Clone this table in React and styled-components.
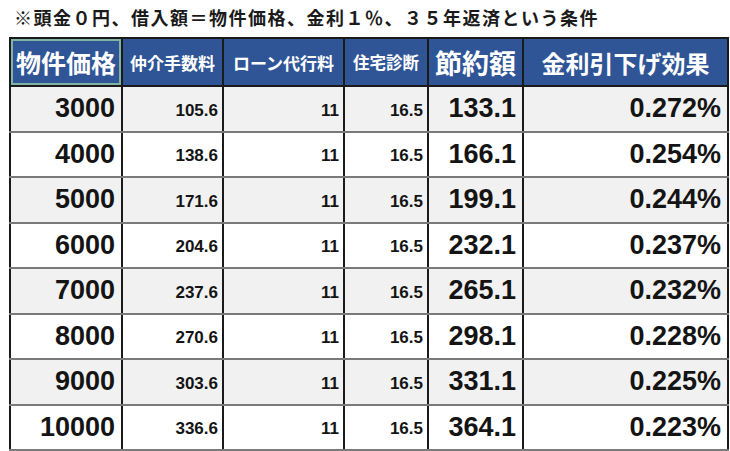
import styled, { createGlobalStyle } from "styled-components";

const GlobalStyle = createGlobalStyle`
    html, body {
        margin: 0;
        padding: 0;
        background: #ffffff;
    }
    body {
        font-family: "Liberation Sans", "Noto Sans CJK JP", sans-serif;
        color: #111;
    }
`;

const Page = styled.div`
    width: 730px;
    height: 451px;
    padding: 0 0 0 9px;
    box-sizing: border-box;
    overflow: hidden;
`;

const Title = styled.div`
    height: 37px;
    display: flex;
    align-items: center;
    padding-left: 5px;
    padding-bottom: 4px;
    box-sizing: border-box;
    font-family: "Noto Sans CJK JP", sans-serif;
    font-weight: 700;
    font-size: 18px;
    letter-spacing: 1.5px;
    color: #1a1a1a;
`;

const Table = styled.table`
    border-collapse: collapse;
    table-layout: fixed;
    width: 718px;
    border: 2px solid #1a1a1a;
`;

const HeadCell = styled.th`
    background: #2f5597;
    color: #ffffff;
    height: 46px;
    padding: 0;
    font-family: "Noto Sans CJK JP", sans-serif;
    font-weight: 700;
    font-size: ${p => p.size}px;
    white-space: nowrap;
    text-align: center;
    border: 2px solid #1a1a1a;
    ${p => p.selected && `box-shadow: inset 0 0 0 2px #7fb3a3;`}
`;

const Row = styled.tr`
    height: 45.5px;
    background: ${p => (p.shade ? "#f1f1f1" : "#ffffff")};
`;

const Cell = styled.td`
    padding: ${p => (p.big ? "0 6px 0 0" : "4px 4px 0 0")};
    text-align: right;
    vertical-align: middle;
    font-family: "Liberation Sans", "Noto Sans CJK JP", sans-serif;
    font-weight: 700;
    font-size: ${p => (p.big ? 27 : 17)}px;
    color: #141414;
    border-left: 2px solid #1a1a1a;
    border-right: 2px solid #1a1a1a;
    border-top: 2px solid #7a7a7a;
    border-bottom: 2px solid #7a7a7a;
    white-space: nowrap;
`;

const rows = [
    ["3000", "105.6", "133.1", "0.272%"],
    ["4000", "138.6", "166.1", "0.254%"],
    ["5000", "171.6", "199.1", "0.244%"],
    ["6000", "204.6", "232.1", "0.237%"],
    ["7000", "237.6", "265.1", "0.232%"],
    ["8000", "270.6", "298.1", "0.228%"],
    ["9000", "303.6", "331.1", "0.225%"],
    ["10000", "336.6", "364.1", "0.223%"],
];

export default function App() {
    return (
        <Page>
            <GlobalStyle />
            <Title>※頭金０円、借入額＝物件価格、金利１％、３５年返済という条件</Title>
            <Table>
                <colgroup>
                    <col style={{ width: 112 }} />
                    <col style={{ width: 101 }} />
                    <col style={{ width: 121 }} />
                    <col style={{ width: 84 }} />
                    <col style={{ width: 95 }} />
                    <col style={{ width: 205 }} />
                </colgroup>
                <thead>
                    <tr>
                        <HeadCell size={25} selected>物件価格</HeadCell>
                        <HeadCell size={17}>仲介手数料</HeadCell>
                        <HeadCell size={17}>ローン代行料</HeadCell>
                        <HeadCell size={16.5}>住宅診断</HeadCell>
                        <HeadCell size={27}>節約額</HeadCell>
                        <HeadCell size={24}>金利引下げ効果</HeadCell>
                    </tr>
                </thead>
                <tbody>
                    {rows.map((r, i) => (
                        <Row key={r[0]} shade={i % 2 === 0}>
                            <Cell big>{r[0]}</Cell>
                            <Cell>{r[1]}</Cell>
                            <Cell>11</Cell>
                            <Cell>16.5</Cell>
                            <Cell big>{r[2]}</Cell>
                            <Cell big>{r[3]}</Cell>
                        </Row>
                    ))}
                </tbody>
            </Table>
        </Page>
    );
}
